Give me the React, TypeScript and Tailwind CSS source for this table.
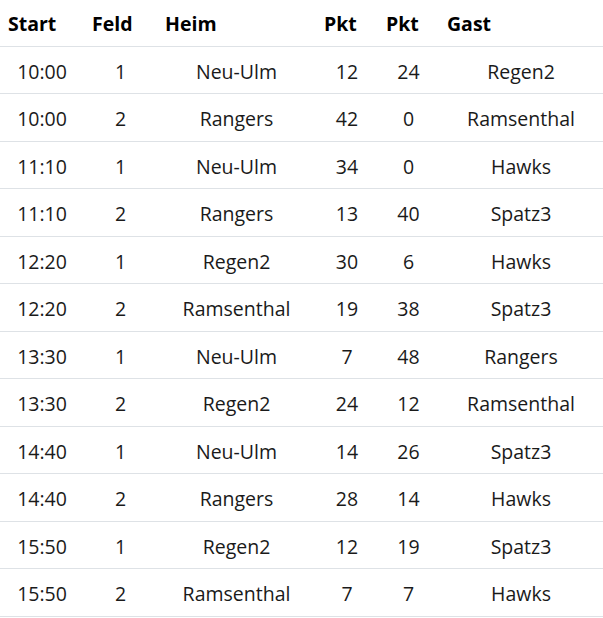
import React from "react";

const rows: [string, string, string, string, string, string][] = [
  ["10:00", "1", "Neu-Ulm", "12", "24", "Regen2"],
  ["10:00", "2", "Rangers", "42", "0", "Ramsenthal"],
  ["11:10", "1", "Neu-Ulm", "34", "0", "Hawks"],
  ["11:10", "2", "Rangers", "13", "40", "Spatz3"],
  ["12:20", "1", "Regen2", "30", "6", "Hawks"],
  ["12:20", "2", "Ramsenthal", "19", "38", "Spatz3"],
  ["13:30", "1", "Neu-Ulm", "7", "48", "Rangers"],
  ["13:30", "2", "Regen2", "24", "12", "Ramsenthal"],
  ["14:40", "1", "Neu-Ulm", "14", "26", "Spatz3"],
  ["14:40", "2", "Rangers", "28", "14", "Hawks"],
  ["15:50", "1", "Regen2", "12", "19", "Spatz3"],
  ["15:50", "2", "Ramsenthal", "7", "7", "Hawks"],
];

const headers = ["Start", "Feld", "Heim", "Pkt", "Pkt", "Gast"];
const widths = ["w-[84px]", "w-[73px]", "w-[159px]", "w-[62px]", "w-[61px]", "w-[164px]"];

export default function App() {
  return (
    <div className="bg-white w-[603px] h-[618px] text-[#1a1a1a] [font-family:'Open_Sans',sans-serif] text-[19.5px]">
      <table className="w-[603px] border-collapse table-fixed">
        <colgroup>
          {widths.map((w, i) => (
            <col key={i} className={w} />
          ))}
        </colgroup>
        <thead>
          <tr className="border-b border-[#dee2e6]">
            {headers.map((h, i) => (
              <th key={i} className="h-[46px] px-2 pt-[3px] pb-0 text-left font-bold text-black leading-[30px]">
                {h}
              </th>
            ))}
          </tr>
        </thead>
        <tbody>
          {rows.map((r, i) => (
            <tr key={i} className="border-b border-[#dee2e6]">
              {r.map((c, j) => (
                <td key={j} className="h-[47.5px] px-2 pt-[4px] pb-0 text-center leading-[30px]">
                  {c}
                </td>
              ))}
            </tr>
          ))}
        </tbody>
      </table>
    </div>
  );
}
